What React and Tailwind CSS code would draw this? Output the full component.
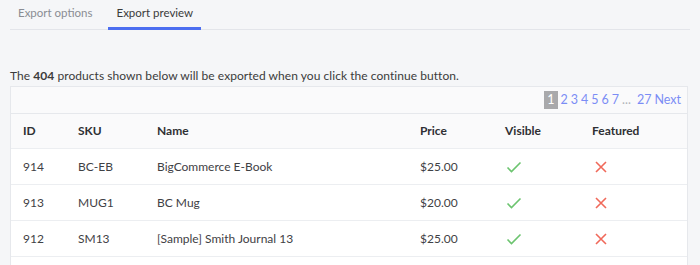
import React from "react";

const rows = [
  { id: 914, sku: "BC-EB", name: "BigCommerce E-Book", price: "$25.00" },
  { id: 913, sku: "MUG1", name: "BC Mug", price: "$20.00" },
  { id: 912, sku: "SM13", name: "[Sample] Smith Journal 13", price: "$25.00" },
];

const cols = "grid grid-cols-[55px_79px_263px_85px_87px_1fr] items-center pl-3";

const Check = () => (
  <svg width="16" height="12" viewBox="0 0 16 12" fill="none">
    <path d="M1.5 6.5 L5.5 10.5 L14.5 1.5" stroke="#6cc46f" strokeWidth="1.6" />
  </svg>
);

const Cross = () => (
  <svg width="12" height="12" viewBox="0 0 12 12" fill="none">
    <path d="M1 1 L11 11 M11 1 L1 11" stroke="#f0695a" strokeWidth="1.6" />
  </svg>
);

export default function App() {
  return (
    <div
      className="h-[265px] overflow-hidden bg-[#f5f6f8] px-[10px] text-[12px] text-[#3b3b3b]"
      style={{ fontFamily: "Lato, 'Open Sans', sans-serif" }}
    >
      {/* tabs */}
      <div className="flex gap-2 border-b border-[#e3e5ea] pt-[4px] text-[11.5px] leading-[18px]">
        <div className="px-2 pb-[7px] text-[#8a8d93]">Export options</div>
        <div className="-mb-px border-b-[3px] border-[#4c6ef0] px-2 pb-[4px] text-[#3b3b3b]">
          Export preview
        </div>
      </div>

      <p className="mt-[36px] leading-[20px] tracking-[0.05px] text-[#3b3b3b]">
        The <span className="font-bold">404</span> products shown below will be exported when you click the continue button.
      </p>

      {/* card */}
      <div className="mr-[2px] border border-[#e6e8ec] bg-white">
        <div className="flex h-[27px] items-center justify-end gap-[3px] border-b border-[#e6e8ec] bg-[#fafafb] pr-[6px] text-[12.5px] text-[#7b8df5]">
          <span className="bg-[#a9a9ab] px-[3px] leading-[18px] text-white">1</span>
          <span>2</span>
          <span>3</span>
          <span>4</span>
          <span>5</span>
          <span>6</span>
          <span>7</span>
          <span className="mr-[3px] text-[#b0b3b8]">...</span>
          <span>27</span>
          <span>Next</span>
        </div>
        <div className={`${cols} h-[35px] border-b border-[#eceef1] bg-[#fafafb] font-bold text-[#2f3033]`}>
          <div>ID</div>
          <div>SKU</div>
          <div>Name</div>
          <div>Price</div>
          <div>Visible</div>
          <div>Featured</div>
        </div>
        {rows.map((r) => (
          <div key={r.id} className={`${cols} h-[36px] border-b border-[#eceef1] text-[#3f4145]`}>
            <div>{r.id}</div>
            <div>{r.sku}</div>
            <div>{r.name}</div>
            <div>{r.price}</div>
            <div className="pl-px">
              <Check />
            </div>
            <div className="pl-[3px]">
              <Cross />
            </div>
          </div>
        ))}
        <div className="h-[36px]" />
      </div>
    </div>
  );
}
